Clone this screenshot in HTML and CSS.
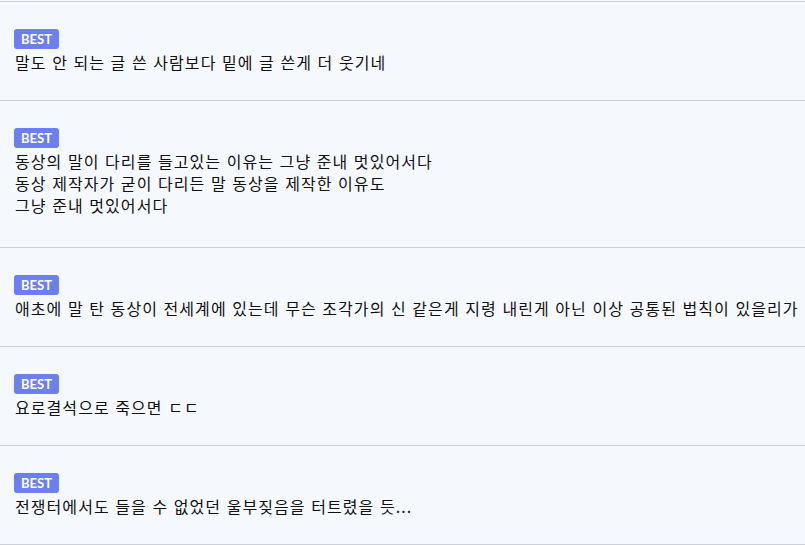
FILE: index.html
```html
<!DOCTYPE html>
<html lang="ko">
<head>
<meta charset="utf-8">
<link rel="stylesheet" href="styles.css">
</head>
<body>
<ul class="list">
  <li class="item">
    <span class="badge">BEST</span>
    <p class="text">말도 안 되는 글 쓴 사람보다 밑에 글 쓴게 더 웃기네</p>
  </li>
  <li class="item item-multi">
    <span class="badge">BEST</span>
    <p class="text">동상의 말이 다리를 들고있는 이유는 그냥 준내 멋있어서다<br>동상 제작자가 굳이 다리든 말 동상을 제작한 이유도<br>그냥 준내 멋있어서다</p>
  </li>
  <li class="item">
    <span class="badge">BEST</span>
    <p class="text">애초에 말 탄 동상이 전세계에 있는데 무슨 조각가의 신 같은게 지령 내린게 아닌 이상 공통된 법칙이 있을리가</p>
  </li>
  <li class="item">
    <span class="badge">BEST</span>
    <p class="text">요로결석으로 죽으면 ㄷㄷ</p>
  </li>
  <li class="item">
    <span class="badge">BEST</span>
    <p class="text">전쟁터에서도 들을 수 없었던 울부짖음을 터트렸을 듯...</p>
  </li>
</ul>
</body>
</html>
```
FILE: styles.css
```css
html, body {
  margin: 0;
  padding: 0;
  background: #f5f8fd;
}
body {
  font-family: "Noto Sans CJK KR", "Noto Sans", sans-serif;
  color: #111;
}
.list {
  list-style: none;
  margin: 0;
  padding: 0;
  border-top: 1px solid #cdd0d6;
  margin-top: 1px;
}
.item {
  border-bottom: 1px solid #cdd0d6;
  padding: 27px 14px 27px;
  display: flex;
  flex-direction: column;
  align-items: flex-start;
}
.item-multi {
  padding-bottom: 31px;
}
.badge {
  display: inline-block;
  background: #6b7ff1;
  color: #fff;
  font-family: "Lato", "Open Sans", sans-serif;
  font-weight: 700;
  font-size: 13px;
  line-height: 20px;
  height: 20px;
  padding: 0 7px;
  border-radius: 3px;
}
.text {
  margin: 2px 0 0 1px;
  font-size: 16px;
  line-height: 22px;
  letter-spacing: 1.07px;
  white-space: nowrap;
}
```
